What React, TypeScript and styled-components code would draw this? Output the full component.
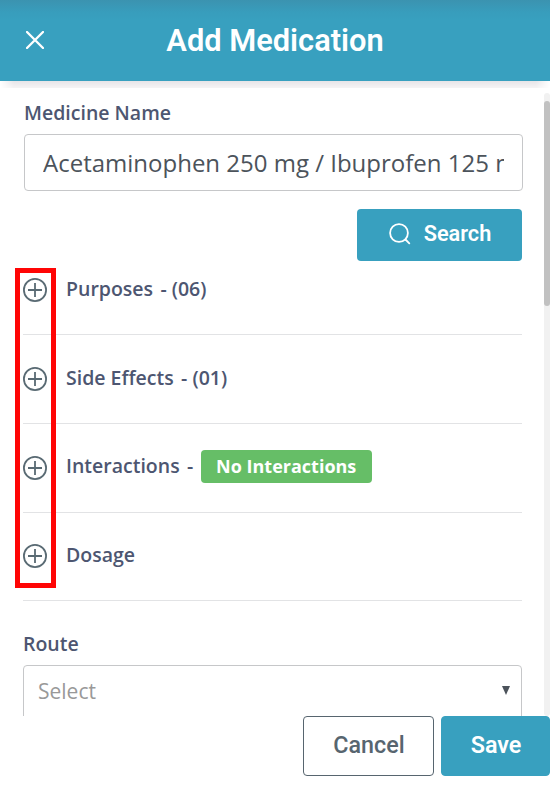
import React from "react";
import styled, { createGlobalStyle } from "styled-components";

const Global = createGlobalStyle`
  *, *::before, *::after { box-sizing: border-box; }
  body { margin: 0; background: #fff; overflow: hidden; }
  button, input { font: inherit; margin: 0; }
`;

const Sheet = styled.div`
  width: 550px;
  height: 797px;
  display: flex;
  flex-direction: column;
  overflow: hidden;
  background: #fff;
  font-family: "Open Sans", sans-serif;
`;

const Header = styled.header`
  flex: none;
  height: 81px;
  padding-bottom: 1px;
  display: grid;
  grid-template-columns: 70px 410px 70px;
  align-items: center;
  background: linear-gradient(#3b93b0 0, #3a97b5 5px, #389dbc 12px, #38a0bf 20px);
`;

const CloseButton = styled.button`
  width: 70px;
  height: 80px;
  padding: 0;
  display: flex;
  align-items: center;
  justify-content: center;
  border: 0;
  background: none;
`;

const Title = styled.h1`
  margin: 0;
  padding-top: 2px;
  text-align: center;
  color: #fff;
  font: 600 30.8px/40px Roboto, sans-serif;
`;

const HeaderShadow = styled.div`
  flex: none;
  height: 7px;
  background: linear-gradient(#e7e5e8, #f5f4f5);
  mask-image: linear-gradient(90deg, transparent 0, #000 14px, #000 536px, transparent 550px);
`;

const Body = styled.div`
  flex: none;
  height: 628px;
  display: flex;
  justify-content: space-between;
  overflow: hidden;
`;

const Form = styled.main`
  width: 523px;
  padding: 11px 0 0 23px;
`;

const Label = styled.label`
  display: block;
  height: 28px;
  line-height: 28px;
  color: #4d5671;
  font-size: 19.5px;
  font-weight: 600;
`;

const MedicineField = styled.div`
  margin-left: 1px;
`;

const RouteField = styled.div`
  padding-top: 29px;
`;

const TextInput = styled.input`
  display: block;
  width: 499px;
  height: 57px;
  margin-top: 7px;
  padding: 0 18px;
  border: 1px solid #c6c7c9;
  border-radius: 4px;
  outline: 0;
  background: #fff;
  color: #4c535b;
  font-size: 24px;
`;

const SearchButton = styled.button`
  width: 165px;
  height: 52px;
  margin: 18px 0 0 334px;
  padding: 0 0 2px 1px;
  display: flex;
  align-items: center;
  justify-content: center;
  gap: 13px;
  border: 0;
  border-radius: 4px;
  background: #38a0bf;
  color: #fff;
  font: 600 21.7px/30px Roboto, sans-serif;
`;

const Sections = styled.div`
  position: relative;
  width: 499px;
`;

const Section = styled.div<{ $height: number; $space: number }>`
  height: ${(p) => p.$height}px;
  padding-top: ${(p) => p.$space}px;
  display: flex;
  align-items: flex-start;
  border-bottom: 1px solid #e2e3e5;
`;

const ExpandButton = styled.button`
  width: 24px;
  height: 24px;
  margin-right: 19px;
  padding: 0;
  border: 0;
  background: none;
  svg { display: block; }
`;

const SectionText = styled.span<{ $raised?: boolean }>`
  height: 24px;
  margin-top: ${(p) => (p.$raised ? -2 : -1)}px;
  line-height: 24px;
  display: flex;
  align-items: center;
  gap: 7.4px;
  color: #4d5671;
  font-size: 19.5px;
  font-weight: 600;
  white-space: nowrap;
`;

const Badge = styled.span`
  width: 171px;
  height: 33px;
  line-height: 33px;
  text-align: center;
  border-radius: 4px;
  background: #66be67;
  color: #fff;
  font-size: 18px;
  font-weight: 700;
`;

const Highlight = styled.div`
  position: absolute;
  left: -8px;
  top: 7px;
  width: 41px;
  height: 320px;
  border: 5px solid #ff0505;
  pointer-events: none;
`;

const Select = styled.div`
  width: 499px;
  height: 57px;
  margin-top: 7px;
  padding: 0 11px 6px 14px;
  display: flex;
  align-items: center;
  justify-content: space-between;
  border: 1px solid #c6c7c9;
  border-radius: 4px;
  color: #999;
  font-size: 21px;
`;

const ScrollTrack = styled.div`
  width: 6px;
  height: 623px;
  margin-top: 5px;
  padding-top: 8px;
  border-radius: 3px;
  background: #f1f1f1;
`;

const ScrollThumb = styled.div`
  height: 205px;
  border-radius: 3px;
  background: #c1c1c1;
`;

const Footer = styled.footer`
  flex: none;
  display: flex;
  justify-content: flex-end;
  gap: 7px;
`;

const ActionButton = styled.button<{ $primary?: boolean }>`
  width: ${(p) => (p.$primary ? 109 : 131)}px;
  height: 60px;
  padding: 0 0 2px 1px;
  border: 1px solid ${(p) => (p.$primary ? "#38a0bf" : "#57656f")};
  border-radius: 4px;
  background: ${(p) => (p.$primary ? "#38a0bf" : "#fff")};
  color: ${(p) => (p.$primary ? "#fff" : "#57656f")};
  font: ${(p) => (p.$primary ? 600 : 500)} 23.3px/30px Roboto, sans-serif;
`;

const sections = [
  { name: "Purposes", detail: "- (06)", height: 74, space: 17 },
  { name: "Side Effects", detail: "- (01)", height: 89, space: 32 },
  { name: "Interactions", detail: "-", badge: "No Interactions", height: 89, space: 32 },
  { name: "Dosage", height: 88, space: 31 },
];

const PlusIcon = () => (
  <svg width="24" height="24" viewBox="0 0 24 24" fill="none" stroke="#596a73" strokeWidth="1.8">
    <circle cx="12" cy="12" r="11.1" />
    <path d="M12 5v14M5 12h14" />
  </svg>
);

export default function App() {
  return (
    <>
      <Global />
      <Sheet>
        <Header>
          <CloseButton aria-label="Close">
            <svg width="18" height="18" viewBox="0 0 18 18" stroke="#fff" strokeWidth="2.3" strokeLinecap="round">
              <path d="M1 1l16 16M17 1L1 17" />
            </svg>
          </CloseButton>
          <Title>Add Medication</Title>
        </Header>
        <HeaderShadow />
        <Body>
          <Form>
            <MedicineField>
              <Label htmlFor="medicine">Medicine Name</Label>
              <TextInput id="medicine" defaultValue="Acetaminophen 250 mg / Ibuprofen 125 mg" />
            </MedicineField>
            <SearchButton>
              <svg width="22" height="22" viewBox="0 0 22 22" fill="none" stroke="#fff" strokeWidth="1.8" strokeLinecap="round">
                <circle cx="10" cy="10" r="8.9" />
                <path d="M16.5 16.5L20.3 20.3" />
              </svg>
              Search
            </SearchButton>
            <Sections>
              {sections.map((s) => (
                <Section key={s.name} $height={s.height} $space={s.space}>
                  <ExpandButton aria-label={`Expand ${s.name}`}>
                    <PlusIcon />
                  </ExpandButton>
                  <SectionText $raised={!!s.badge}>
                    <span>{s.name}</span>
                    {s.detail && <span>{s.detail}</span>}
                    {s.badge && <Badge>{s.badge}</Badge>}
                  </SectionText>
                </Section>
              ))}
              <Highlight />
            </Sections>
            <RouteField>
              <Label as="div">Route</Label>
              <Select>
                <span>Select</span>
                <svg width="8" height="9" viewBox="0 0 8 9" fill="#4c535b">
                  <path d="M0 0h8L4 9z" />
                </svg>
              </Select>
            </RouteField>
          </Form>
          <ScrollTrack>
            <ScrollThumb />
          </ScrollTrack>
        </Body>
        <Footer>
          <ActionButton>Cancel</ActionButton>
          <ActionButton $primary>Save</ActionButton>
        </Footer>
      </Sheet>
    </>
  );
}
